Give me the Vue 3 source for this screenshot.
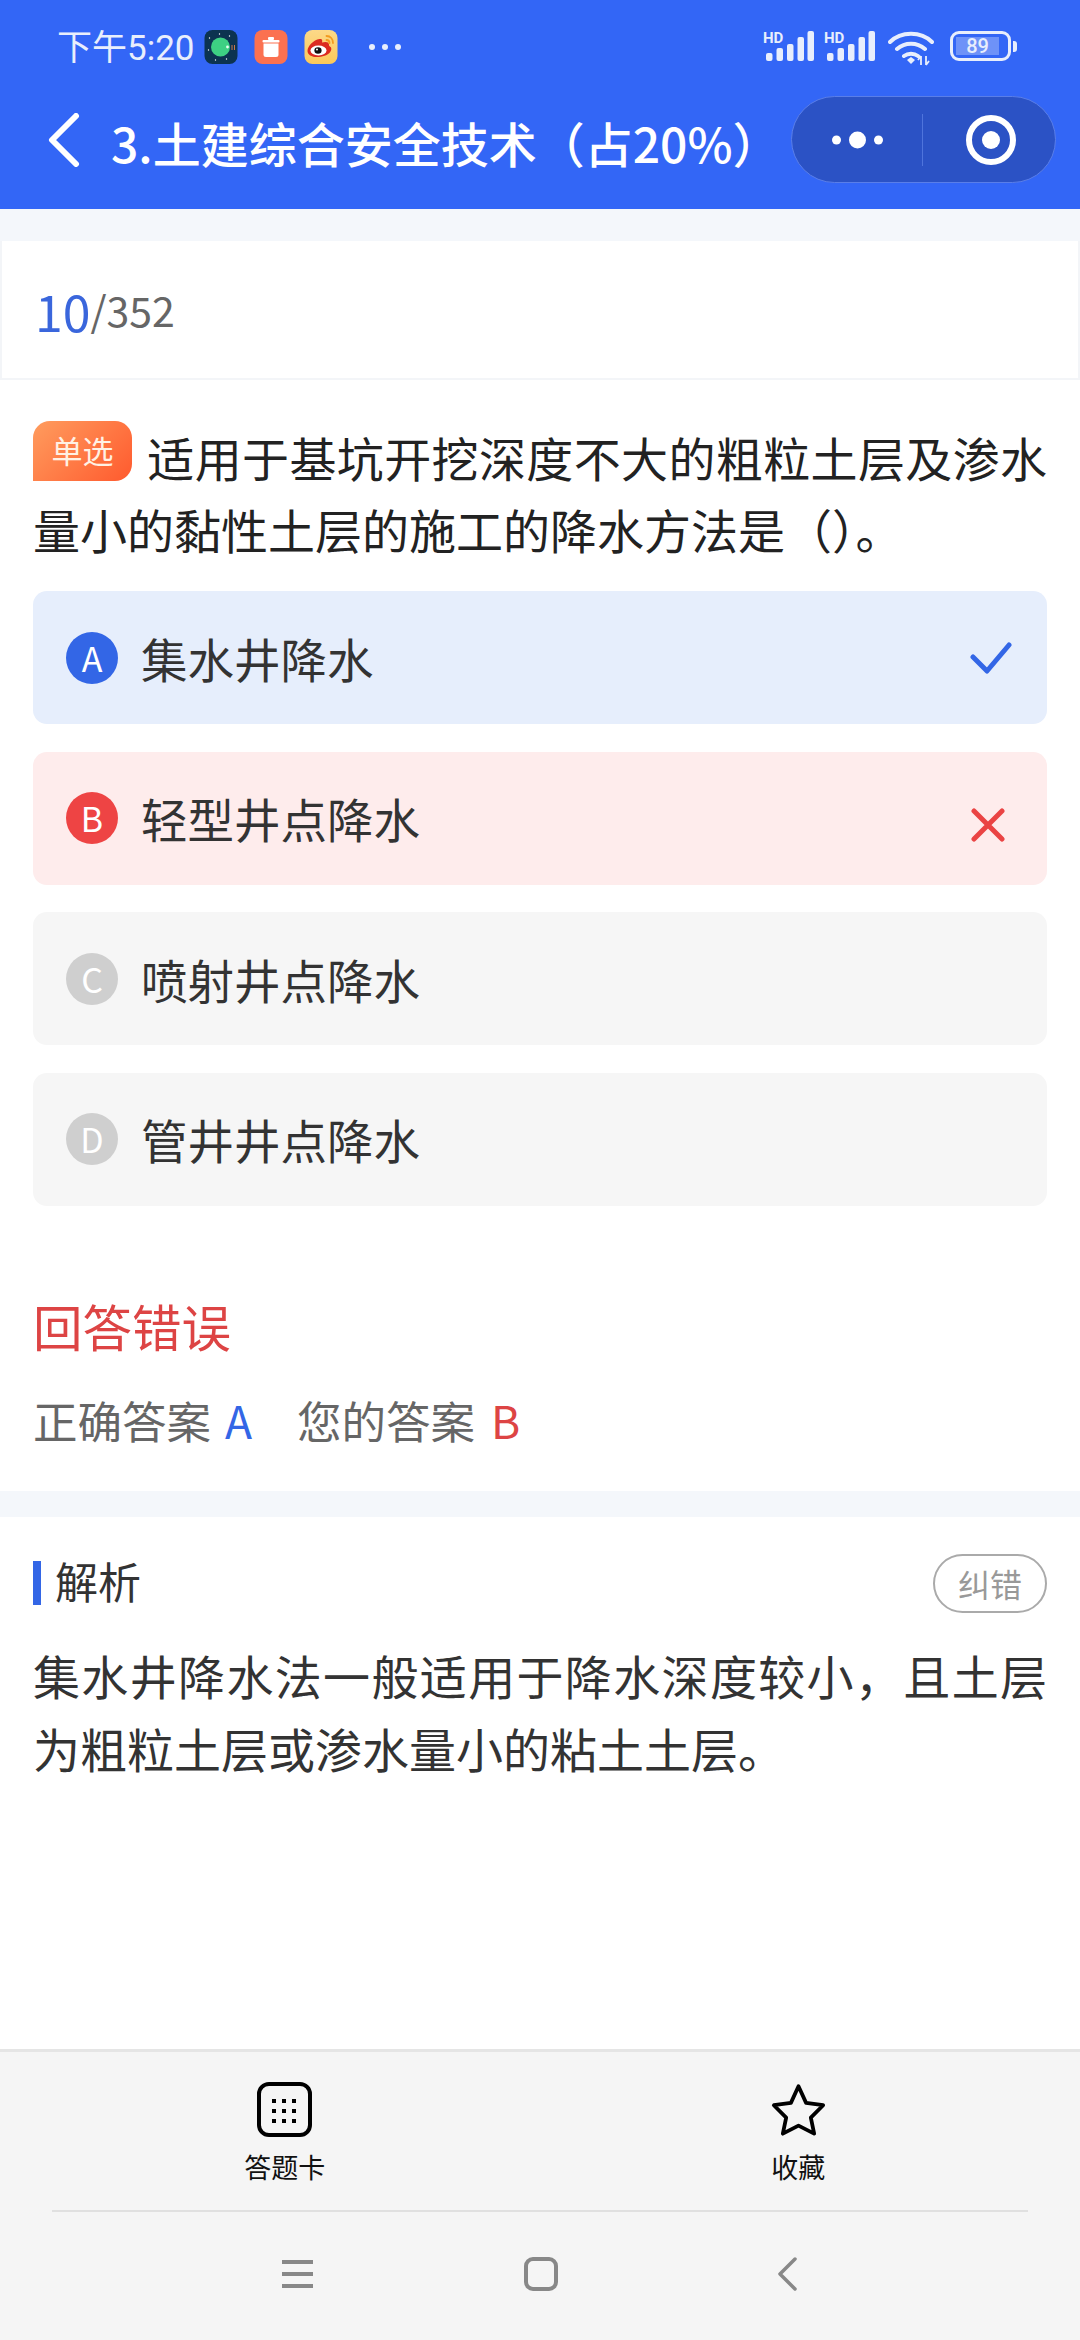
<script setup>
const options = [
  { key: 'A', text: '集水井降水', state: 'right' },
  { key: 'B', text: '轻型井点降水', state: 'wrong' },
  { key: 'C', text: '喷射井点降水', state: 'idle' },
  { key: 'D', text: '管井井点降水', state: 'idle' }
]
const gridDots = [0, 1, 2].flatMap((r) => [0, 1, 2].map((c) => ({ x: 15 + c * 10, y: 17 + r * 10 })))
</script>

<template>
  <div class="page">
    <header class="header">
      <div class="status">
        <span class="time">下午5:20</span>
        <svg class="app" viewBox="0 0 33 34">
          <rect width="33" height="34" rx="8" fill="#0c3350" />
          <circle cx="16" cy="17" r="9.500" fill="#3dd083" />
          <circle cx="23" cy="17" r="1.400" fill="#e8fff2" />
          <rect x="27" y="15" width="1" height="5" fill="#c9764c" />
          <rect x="29.500" y="15" width="1" height="5" fill="#c9764c" />
          <circle cx="5" cy="8" r=".7" fill="#fff" /><circle cx="15" cy="4" r=".7" fill="#fff" />
          <circle cx="25" cy="6" r=".7" fill="#fff" /><circle cx="4" cy="20" r=".7" fill="#fff" />
          <circle cx="11" cy="30" r=".7" fill="#fff" /><circle cx="22" cy="29" r=".7" fill="#fff" />
        </svg>
        <svg class="app" viewBox="0 0 33 34">
          <rect width="33" height="34" rx="8" fill="#fb7150" />
          <rect x="8" y="10" width="17" height="2.500" rx="1" fill="#fff" />
          <rect x="13.500" y="7" width="6" height="3" rx="1" fill="#fff" />
          <path d="M9 13.500h15v11a2.500 2.500 0 0 1-2.500 2.500h-10A2.500 2.500 0 0 1 9 24.500z" fill="#fff" />
        </svg>
        <svg class="app" viewBox="0 0 33 34">
          <defs>
            <linearGradient id="wb" x1="0" y1="0" x2="0" y2="1">
              <stop offset="0" stop-color="#fcd988" /><stop offset="1" stop-color="#fbc95a" />
            </linearGradient>
          </defs>
          <rect width="33" height="34" rx="8" fill="url(#wb)" />
          <path d="M3 21c0-5 6-11 12-12 3-.5 3 2 2.500 3.500 3-1 7-1 7 2 0 1 0 1.500 1.500 2.500 2 1.500 1 9-12 10C8 27.500 3 25 3 21z" fill="#dc2a20" />
          <ellipse cx="14" cy="20.500" rx="8" ry="5" fill="#fff" />
          <ellipse cx="13.500" cy="20.500" rx="3.600" ry="3.200" fill="#111" />
          <circle cx="12.500" cy="19.500" r="1" fill="#fff" />
          <path d="M22 6c4 0 6.500 3 6.500 7M22 10c2 0 3 1.200 3 3" fill="none" stroke="#f29a1f" stroke-width="1.800" stroke-linecap="round" />
        </svg>
        <svg class="more" viewBox="0 0 34 8"><circle cx="4" cy="4" r="3" /><circle cx="17" cy="4" r="3" /><circle cx="30" cy="4" r="3" /></svg>
        <span class="status-space"></span>
        <svg v-for="n in 2" :key="n" class="signal" viewBox="0 0 51 34">
          <text x="0" y="13" class="hd">HD</text>
          <rect x="3" y="23" width="6.500" height="8" rx="2" /><rect x="13.500" y="18" width="6.500" height="13" rx="2" />
          <rect x="24" y="14" width="6.500" height="17" rx="2" /><rect x="34.500" y="7" width="6.500" height="24" rx="2" />
          <rect x="44.500" y="1" width="6.500" height="30" rx="2" />
        </svg>
        <svg class="wifi" viewBox="0 0 46 36">
          <path d="M2 12C13 1 33 1 44 12M9 19c8-7 20-7 28 0M16 26c4-3 10-3 14 0" fill="none" stroke="#e8eefc" stroke-width="4" stroke-linecap="round" />
          <path d="M19 30l4-3 4 3-4 4z" fill="#e8eefc" />
          <path d="M33 26v9M33 26l-3 4M38 35v-9M38 35l3-4" fill="none" stroke="#e8eefc" stroke-width="1.800" />
        </svg>
        <div class="battery">
          <div class="battery-body"><span class="battery-level">89</span></div>
          <span class="battery-nub"></span>
        </div>
      </div>
      <div class="titlebar">
        <svg class="back" viewBox="0 0 34 54"><path d="M29 3L5 27l24 24" fill="none" stroke="#fff" stroke-width="6" stroke-linecap="round" stroke-linejoin="round" /></svg>
        <h1 class="title">3.土建综合安全技术（占20%）</h1>
        <div class="capsule">
          <svg class="capsule-dots" viewBox="0 0 51 18"><circle cx="4.500" cy="9" r="4.500" /><circle cx="25.500" cy="9" r="8.500" /><circle cx="46.500" cy="9" r="4.500" /></svg>
          <span class="capsule-line"></span>
          <svg class="capsule-target" viewBox="0 0 50 50"><circle cx="25" cy="25" r="22" fill="none" stroke="#fff" stroke-width="6" /><circle cx="25" cy="25" r="9" fill="#fff" /></svg>
        </div>
      </div>
    </header>

    <div class="progress"><span class="current">10</span><span class="total">/352</span></div>

    <section class="question">
      <p class="stem"><span class="badge">单选</span>适用于基坑开挖深度不大的粗粒土层及渗水量小的黏性土层的施工的降水方法是（）。</p>
      <div class="options">
        <div v-for="o in options" :key="o.key" class="option" :class="o.state">
          <span class="letter">{{ o.key }}</span>
          <span class="option-text">{{ o.text }}</span>
          <svg v-if="o.state === 'right'" class="mark check" viewBox="0 0 42 32"><path d="M3 15l14 14L39 3" fill="none" stroke="#3366e6" stroke-width="5" stroke-linecap="round" stroke-linejoin="round" /></svg>
          <svg v-if="o.state === 'wrong'" class="mark cross" viewBox="0 0 34 34"><path d="M3 3l28 28M31 3L3 31" fill="none" stroke="#ea4444" stroke-width="5" stroke-linecap="round" /></svg>
        </div>
      </div>
      <div class="verdict">回答错误</div>
      <div class="answers">
        <span>正确答案</span><span class="a-right">A</span>
        <span class="second">您的答案</span><span class="a-wrong">B</span>
      </div>
    </section>

    <section class="analysis">
      <div class="analysis-head">
        <span class="analysis-title"><span class="analysis-label">解析</span></span>
        <span class="report">纠错</span>
      </div>
      <p class="analysis-text">集水井降水法一般适用于降水深度较小，且土层为粗粒土层或渗水量小的粘土土层。</p>
    </section>

    <footer class="footer">
      <div class="tabs">
        <div class="tab">
          <svg class="tab-icon" viewBox="0 0 55 55">
            <rect x="2" y="2" width="51" height="51" rx="10" fill="none" stroke="#000" stroke-width="4" />
            <rect v-for="(d, i) in gridDots" :key="i" :x="d.x" :y="d.y" width="4" height="4" />
          </svg>
          <span>答题卡</span>
        </div>
        <div class="tab">
          <svg class="tab-icon" viewBox="0 0 58 55">
            <path d="M29 3l8 17.500 18 2.500-13 13 3.500 17L29 44.500 12.500 53 16 36 3 23l18-2.500z" fill="none" stroke="#000" stroke-width="4" stroke-linejoin="round" />
          </svg>
          <span>收藏</span>
        </div>
      </div>
      <div class="footer-line"></div>
      <nav class="navbar">
        <svg class="nav-menu" viewBox="0 0 31 30"><path d="M0 3h31M0 15h31M0 27h31" fill="none" stroke="#888" stroke-width="4" /></svg>
        <svg class="nav-home" viewBox="0 0 34 34"><rect x="2" y="2" width="30" height="30" rx="7" fill="none" stroke="#888" stroke-width="4" /></svg>
        <svg class="nav-back" viewBox="0 0 20 34"><path d="M18 2L3 17l15 15" fill="none" stroke="#888" stroke-width="3.500" stroke-linecap="round" stroke-linejoin="round" /></svg>
      </nav>
    </footer>
  </div>
</template>

<style>
body { margin: 0; }
</style>

<style scoped>
.page {
  width: 1080px;
  height: 2340px;
  display: flex;
  flex-direction: column;
  background: #fff;
  font-family: "Noto Sans CJK SC", "Noto Sans", sans-serif;
  color: #222;
  overflow: hidden;
}
.header {
  height: 209px;
  flex: none;
  background: #3366f6;
}
.status {
  height: 96px;
  display: flex;
  align-items: flex-start;
  padding: 30px 63px 0 57px;
  box-sizing: border-box;
  color: #e8eefc;
}
.time {
  font-family: Roboto, "Noto Sans CJK SC", sans-serif;
  font-size: 35px;
  line-height: 38px;
  width: 147px;
  white-space: nowrap;
}
.app { width: 34px; height: 34px; margin-right: 16px; }
.more { width: 34px; height: 8px; margin: 13px 0 0 14px; fill: #e8eefc; }
.status-space { flex: 1; }
.signal { width: 51px; height: 34px; margin-right: 10px; fill: #e8eefc; overflow: visible; }
.signal + .wifi { margin-left: 3px; }
.hd { font: 700 15px Roboto, sans-serif; }
.wifi { width: 46px; height: 36px; margin-right: 16px; }
.battery { display: flex; align-items: center; height: 32px; }
.battery-body {
  width: 61px;
  height: 30px;
  box-sizing: border-box;
  border: 3px solid #e8eefc;
  border-radius: 9px;
  padding: 3px;
  display: flex;
}
.battery-level {
  flex: none;
  width: 43px;
  background: #6e92f8;
  font: 500 20px/18px Roboto, sans-serif;
  color: #e8eefc;
  text-align: center;
}
.battery-nub { width: 4px; height: 11px; margin-left: 2px; border-radius: 0 3px 3px 0; background: #e8eefc; }
.titlebar {
  display: flex;
  align-items: center;
  height: 87px;
  padding: 0 24px 0 47px;
}
.back { width: 34px; height: 54px; flex: none; }
.title {
  margin: 5px 0 0 30px;
  color: #fff;
  font-size: 48px;
  font-weight: 500;
  line-height: 60px;
  white-space: nowrap;
  flex: 1;
  min-width: 0;
}
.capsule {
  width: 265px;
  height: 87px;
  flex: none;
  box-sizing: border-box;
  border: 1px solid #5a7ee8;
  border-radius: 44px;
  background: #2b52c5;
  display: flex;
  align-items: center;
}
.capsule-dots { width: 51px; height: 18px; fill: #fff; margin-left: 40px; }
.capsule-line { width: 1px; height: 52px; margin-left: 39px; background: #4f74dc; }
.capsule-target { width: 50px; height: 50px; margin-left: 43px; }
.progress {
  flex: none;
  margin-top: 32px;
  height: 139px;
  box-sizing: border-box;
  border: 2px solid #f3f5f8;
  border-top: 0;
  padding-left: 33px;
  display: flex;
  align-items: center;
  line-height: 1;
  box-shadow: 0 -32px 0 #f4f7fb;
}
.current { color: #3a66dc; font-size: 50px; }
.total { color: #666; font-size: 41px; }
.question { flex: none; padding: 41px 33px 0; height: 1111px; box-sizing: border-box; }
.stem {
  margin: 0;
  font-size: 47px;
  line-height: 72px;
  color: #222;
  word-break: break-all;
  text-align: justify;
}
.badge {
  display: inline-block;
  width: 99px;
  height: 60px;
  margin-right: 15px;
  border-radius: 17px 17px 17px 0;
  background: linear-gradient(135deg, #ff9c5e, #ff5a2e);
  color: #fff1e4;
  font-size: 31px;
  line-height: 58px;
  text-align: center;
  vertical-align: 14px;
}
.options { display: flex; flex-direction: column; gap: 27.500px; margin-top: 26px; }
.option {
  height: 133px;
  border-radius: 14px;
  display: flex;
  align-items: center;
  padding-left: 33px;
  background: #f6f6f6;
}
.option.right { background: #e6eefc; }
.option.wrong { background: #feecec; }
.letter {
  width: 52px;
  height: 52px;
  border-radius: 50%;
  background: #cfcfcf;
  color: #fff;
  font-size: 34px;
  line-height: 52px;
  text-align: center;
  flex: none;
}
.right .letter { background: #3366e6; }
.wrong .letter { background: #ee4444; }
.option-text { margin-left: 23px; font-size: 46.500px; color: #333; line-height: 60px; }
.mark { margin-left: auto; }
.check { width: 42px; height: 32px; margin-right: 35px; }
.cross { width: 34px; height: 34px; margin: 14px 42px 0 auto; }
.verdict { margin-top: 85px; font-size: 49.500px; line-height: 70px; color: #dd4444; }
.answers { margin-top: 29px; font-size: 44.500px; line-height: 60px; color: #666; display: flex; }
.a-right { color: #3366e6; margin-left: 14px; }
.a-wrong { color: #dd4444; margin-left: 16px; }
.second { margin-left: 45px; }
.analysis {
  flex: 1;
  min-height: 0;
  border-top: 26px solid #f4f7fb;
  padding: 36px 33px 0;
}
.analysis-head { display: flex; align-items: center; justify-content: space-between; height: 60px; }
.analysis-title {
  border-left: 8px solid #3366e6;
  padding-left: 14px;
  height: 44px;
  display: flex;
  align-items: center;
  font-size: 43px;
  color: #333;
}
.analysis-label { margin-top: -6px; }
.report {
  width: 114px;
  height: 59px;
  box-sizing: border-box;
  border: 2px solid #aaa;
  border-radius: 30px;
  color: #999;
  font-size: 32px;
  line-height: 55px;
  text-align: center;
}
.analysis-text { margin: 25px 0 0; font-size: 47px; line-height: 73px; color: #333; text-align: justify; }
.footer {
  flex: none;
  height: 291px;
  box-sizing: border-box;
  border-top: 3px solid #e5e5e5;
  background: #f5f5f5;
}
.tabs {
  height: 158px;
  padding: 0 25px 0 28px;
  display: grid;
  grid-template-columns: 1fr 1fr;
  box-sizing: border-box;
}
.tab {
  display: flex;
  flex-direction: column;
  align-items: center;
  padding-top: 30px;
  box-sizing: border-box;
  font-size: 27px;
  line-height: 36px;
  color: #111;
}
.tab span { margin-top: 12px; }
.tab-icon { width: 55px; height: 55px; }
.footer-line { height: 2px; margin: 0 52px; background: #e0e0e0; }
.navbar {
  height: 128px;
  display: grid;
  grid-template-columns: 282px 31px 211px 34px 219px 20px;
  align-items: center;
  padding-bottom: 4px;
  box-sizing: border-box;
}
.nav-menu { grid-column: 2; width: 31px; height: 30px; }
.nav-home { grid-column: 4; width: 34px; height: 34px; }
.nav-back { grid-column: 6; width: 20px; height: 34px; }
</style>
